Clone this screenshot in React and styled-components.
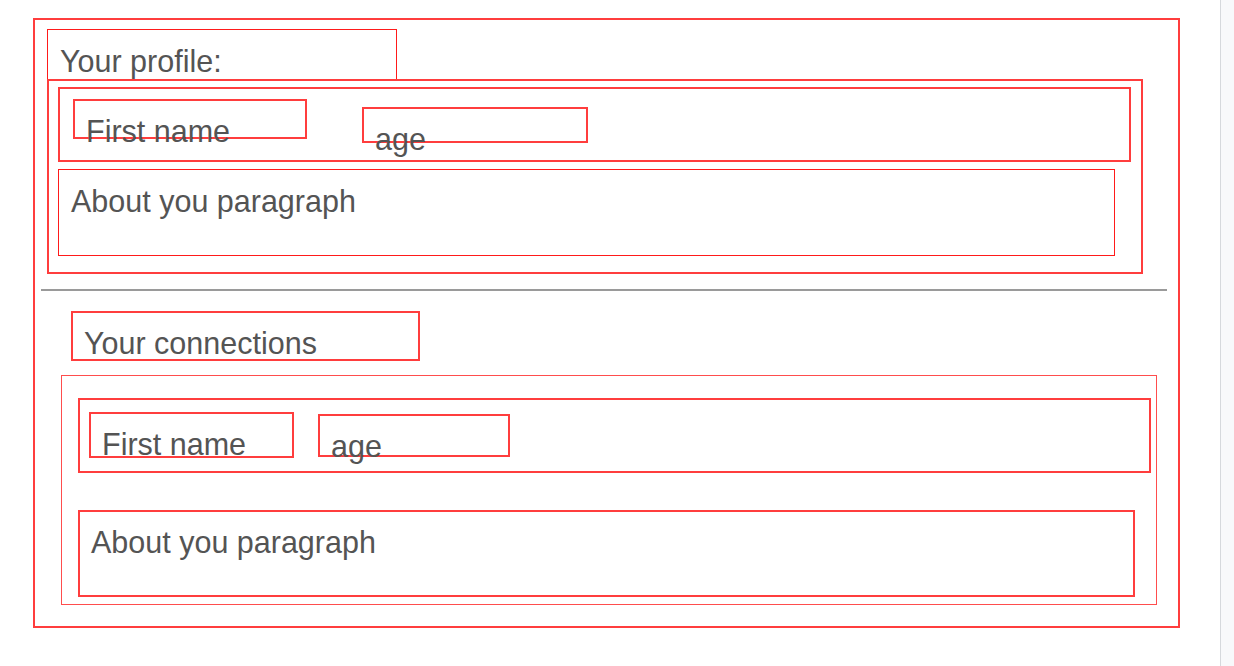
import React from 'react';
import styled, { createGlobalStyle } from 'styled-components';

const GlobalStyle = createGlobalStyle`
  * {
    box-sizing: border-box;
  }
  body {
    margin: 0;
    background: #fff;
    font-family: 'Liberation Sans', Arial, sans-serif;
  }
`;

const Page = styled.div`
  display: flex;
  height: 100vh;
  overflow: hidden;
`;

const Main = styled.main`
  flex: 1;
  padding: 18px 0 0 33px;
`;

const ScrollEdge = styled.div`
  width: 14px;
  border-left: 1px solid #d6d9dd;
  background: #f8f9fb;
`;

const Frame = styled.div`
  width: 1147px;
  height: 610px;
  border: 2px solid #ff3d3d;
`;

const outline = p => `${p.$bw || 2}px solid ${p.$color || '#ff3d3d'}`;

const Label = styled.div`
  width: ${p => p.$w}px;
  height: ${p => p.$h}px;
  margin: ${p => p.$m || '0'};
  border: ${outline};
  padding: ${p => 15 - (p.$bw || 2)}px 0 0 ${p => 13 - (p.$bw || 2)}px;
  flex-shrink: 0;
  font-size: 30.5px;
  line-height: 34px;
  color: #545454;
  white-space: nowrap;
`;

const Panel = styled.div`
  width: 1096px;
  height: ${p => p.$h}px;
  margin: ${p => p.$m};
  border: ${outline};
  padding: ${p => p.$pad};
`;

const FieldRow = styled.div`
  display: flex;
  align-items: flex-start;
  width: 1073px;
  height: 75px;
  border: 2px solid #ff3d3d;
  padding-left: ${p => p.$inset}px;
`;

const Divider = styled.hr`
  width: 1126px;
  margin: 15px 0 0 6px;
  border: 0;
  border-top: 2px solid #9a9a9a;
`;

const About = styled(Label)`
  width: 1057px;
  height: 87px;
`;

export default function App() {
  return (
    <>
      <GlobalStyle />
      <Page>
        <Main>
          <Frame>
            <Label $w={350} $h={51} $bw={1} $color="#ff1a1a" $m="9px 0 0 12px">
              Your profile:
            </Label>
            <Panel $h={195} $m="-1px 0 0 12px" $pad="6px 0 0 9px">
              <FieldRow $inset={13}>
                <Label $w={234} $h={40} $m="10px 0 0 0">First name</Label>
                <Label $w={226} $h={36} $m="18px 0 0 55px">age</Label>
              </FieldRow>
              <About $bw={1} $color="#ff1a1a" $m="7px 0 0 0">
                About you paragraph
              </About>
            </Panel>

            <Divider />

            <Label $w={349} $h={50} $m="20px 0 0 36px">
              Your connections
            </Label>
            <Panel $h={230} $bw={1} $color="#ff4d4d" $m="14px 0 0 26px" $pad="22px 0 0 16px">
              <FieldRow $inset={9}>
                <Label $w={205} $h={46} $m="12px 0 0 0">First name</Label>
                <Label $w={192} $h={43} $m="14px 0 0 24px">age</Label>
              </FieldRow>
              <About $m="37px 0 0 0">About you paragraph</About>
            </Panel>
          </Frame>
        </Main>
        <ScrollEdge />
      </Page>
    </>
  );
}
